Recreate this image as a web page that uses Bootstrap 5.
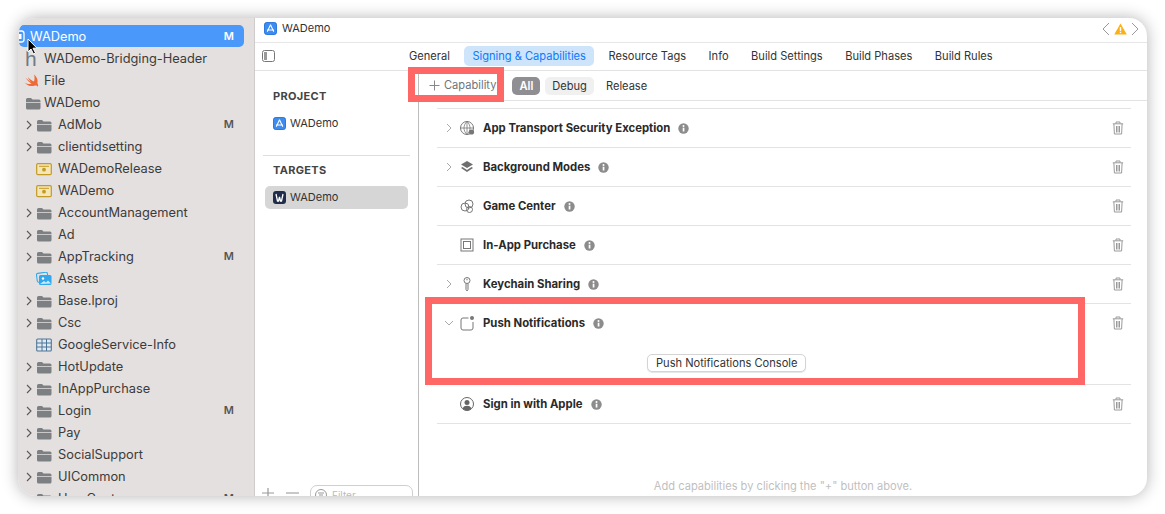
<!DOCTYPE html>
<html lang="en">
<head>
<meta charset="utf-8">
<title>WADemo</title>
<link href="https://cdn.jsdelivr.net/npm/bootstrap@5.3.0/dist/css/bootstrap.min.css" rel="stylesheet">
<style>
html,body{height:100%;background:#fff;overflow:hidden}
body{padding:18px;font-family:Inter,"Liberation Sans",sans-serif;font-size:12px;color:#333}
.xc-win{width:1129px;height:478px;border-radius:18px;overflow:hidden;background:#fff;box-shadow:0 0 16px rgba(0,0,0,.3);position:relative}
.xc-side{width:237px;flex:none;background:#e4e0df;border-right:1px solid #cfcdcc;padding:7px 10px 0 1px;font-size:12.8px;color:#3b3b3b}
.xc-row{height:22px;white-space:nowrap;padding-top:1px}
.xc-row.on{background:#4b98fb;color:#fff;border-radius:5px}
.xc-chev{width:8px;height:10px;flex:none;margin-left:6px;margin-right:3px}
.xc-fi{width:16px;height:14px;flex:none;margin-right:6px}
.xc-fi.leaf{margin-left:17px}
.xc-h{width:12px;flex:none;margin-right:7px;font-family:"Liberation Sans",sans-serif;font-size:21px;line-height:1;color:#6f7a85}
.xc-m{margin-left:auto;margin-right:10px;font-weight:600;font-size:11px;color:#555}
.on .xc-m{color:#fff}
.xc-main{min-width:0}
.xc-title{height:25px;border-bottom:1px solid #e6e6e6;padding:0 10px 3px 9px;font-size:11px;flex:none}
.xc-tabs{height:28px;border-bottom:1px solid #e3e3e3;padding-left:7px;padding-bottom:1px;font-size:11.1px;flex:none}
.xc-tab{padding:3px 8px;margin-right:6.5px;line-height:14px;border-radius:5px;color:#333}
.xc-tab.on{background:#cde4fb;color:#0a7aff}
.xc-mid{width:164px;flex:none;border-right:1px solid #bdbdbd;padding:0 8px;position:relative;overflow:hidden}
.xc-head{font-size:11px;font-weight:700;color:#444;letter-spacing:.3px;padding-left:10px;line-height:16px}
.xc-head.first{padding-top:17px}
.xc-tgt{height:23px;padding-left:10px;font-size:11px;gap:4px}
.xc-tgt.on{background:#d6d6d6;border-radius:5px;margin:8px 2px 0;padding-left:8px}
.xc-div{border-top:1px solid #dedede;margin:20px 0 6px}
.xc-right{min-width:0;position:relative}
.xc-bar{height:30px;border-bottom:1px solid #e3e3e3;font-size:11.1px;padding-left:10px;flex:none}
.xc-pill{padding:2px 7px;line-height:14px;border-radius:5px}
.xc-pill.sel{background:#8e8e93;color:#fff;font-weight:600}
.xc-pill.alt{background:#f0f0f0}
.xc-caps{margin:7px 16px 0 18px;border-top:1px solid #e3e3e3}
.xc-cap{height:39px;border-bottom:1px solid #e3e3e3;padding:0 7px 0 7px}
.xc-name{font-weight:700;font-size:11.35px;color:#2a2a2a;padding-top:1px}
.xc-cchev{width:10px;height:10px;flex:none;margin-right:5px}
.xc-cicon{width:16px;height:16px;flex:none;margin-right:8px}
.xc-info{width:11px;height:11px;margin-left:8px;flex:none}
.xc-trash{width:12px;height:14px;margin-left:auto;flex:none}
.xc-open{height:81px;border-bottom:1px solid #e3e3e3}
.xc-openhead{height:38px;padding:0 7px}
.xc-console{position:absolute;left:210px;bottom:12px;margin:0;padding:0 8px;height:18px;line-height:16px;font-size:11.1px;color:#333;background:#fff;border:1px solid #d4d4d4;border-radius:5px;box-shadow:0 1px 1px rgba(0,0,0,.1)}
.xc-hint{position:absolute;left:0;right:0;bottom:1px;text-align:center;color:#bfbfbf;font-size:11.1px}
.xc-red{position:absolute;border:7px solid #ff6767;z-index:5;pointer-events:none}
.xc-red.a{left:390px;top:49px;width:96px;height:35px}
.xc-red.b{left:407px;top:279px;width:660px;height:88px}
.xc-cursor{position:absolute;left:9px;top:20px;width:12px;height:17px;z-index:6}
.xc-pm{left:243px;top:468px}
.xc-filter{position:absolute;left:292px;top:467px;width:103px;height:24px;border:1px solid #cfcfcf;border-radius:7px;font-size:10px;color:#bbb;padding:2px 0 0 21px}
.xc-fc{position:absolute;left:4px;top:3px;width:12px;height:12px}
</style>
</head>
<body>
<svg width="0" height="0" class="position-absolute">
<defs>
<symbol id="i-chev" viewBox="0 0 8 10"><path d="M2 1l4 4-4 4" fill="none" stroke="#5a5a5a" stroke-width="1.1"/></symbol>
<symbol id="i-chev2" viewBox="0 0 10 10"><path d="M3 1l4 4-4 4" fill="none" stroke="#a8a8a8" stroke-width="1"/></symbol>
<symbol id="i-down" viewBox="0 0 10 10"><path d="M1 3l4 4 4-4" fill="none" stroke="#a8a8a8" stroke-width="1"/></symbol>
<symbol id="i-folder" viewBox="0 0 16 14"><path d="M1 3.500A1.500 1.500 0 0 1 2.500 2H6l1.500 1.500H14A1.500 1.500 0 0 1 15.500 5v1H1z" fill="#7d8083"/><path d="M1 6.700h14.500V12a1.500 1.500 0 0 1-1.500 1.500H2.500A1.500 1.500 0 0 1 1 12z" fill="#7d8083"/></symbol>
<symbol id="i-cfg" viewBox="0 0 16 14"><rect x=".7" y="1.700" width="14.600" height="11" rx="1.200" fill="#f4e6b8" stroke="#c39a22" stroke-width="1.200"/><path d="M3 4.300h10" stroke="#c39a22" stroke-width="1"/><circle cx="8" cy="7.700" r="1.900" fill="#c39a22"/></symbol>
<symbol id="i-app" viewBox="0 0 14 14"><rect x=".5" y=".5" width="13" height="13" rx="2.500" fill="#3d8cf0" stroke="#2070d8"/><path d="M7 3L3.500 10.500M7 3l3.500 7.500M3.200 8.500h7.600" stroke="#fff" stroke-width="1.100" fill="none"/></symbol>
<symbol id="i-info" viewBox="0 0 11 11"><circle cx="5.500" cy="5.500" r="5.200" fill="#8c8c8c"/><rect x="4.700" y="4.700" width="1.700" height="3.800" fill="#fff"/><circle cx="5.500" cy="3.100" r="1" fill="#fff"/></symbol>
<symbol id="i-trash" viewBox="0 0 12 14"><path d="M.8 2.800h10.400M4 2.500V1h4v1.500M1.900 3l.5 10h7.200l.5-10M4.500 5v6.500M6 5v6.500M7.500 5v6.500" fill="none" stroke="#9a9a9a" stroke-width="1"/></symbol>
</defs>
</svg>
<div class="xc-win d-flex">
  <aside class="xc-side">
    <ul class="list-unstyled m-0">
      <li class="xc-row on d-flex align-items-center"><svg width="6" height="13" viewBox="6 0 6 13" style="margin-right:5px;flex:none"><rect x="1" y="1" width="10" height="11" rx="2.500" fill="none" stroke="#fff" stroke-width="1.300"/><rect x="3.500" y="4" width="5" height="5" fill="#fff"/></svg>WADemo<span class="xc-m">M</span></li>
      <li class="xc-row d-flex align-items-center" style="padding-left:6px"><span class="xc-h">h</span>WADemo-Bridging-Header</li>
      <li class="xc-row d-flex align-items-center" style="padding-left:5px"><svg class="xc-fi" viewBox="0 0 16 14" style="margin-right:4px"><path d="M10 .5c3 2.500 4.300 6.300 3.300 8.500 1 1.500 1 3 .5 3.700-.700-1.200-2-1.500-3.500-1-3 1-7 .2-9.800-3.200C3 10 5.500 10.500 7.500 9.700 5 8 3 6 1.500 3.500 3.500 5.500 6 7.300 7 8 5.500 6.500 4.500 4.800 3.800 3 6 5.500 8.500 7 10 7.500c.8-2 .7-4.500 0-7z" fill="#ee6a36"/></svg>File</li>
      <li class="xc-row d-flex align-items-center" style="margin-left:-4px"><svg width="3" height="6" viewBox="0 0 3 6" style="margin-right:7px;flex:none"><path d="M0 2l1.500 1.500L3 2" fill="none" stroke="#666"/></svg><svg class="xc-fi" style="margin-right:3px"><use href="#i-folder"/></svg>WADemo</li>
      <li class="xc-row d-flex align-items-center"><svg class="xc-chev"><use href="#i-chev"/></svg><svg class="xc-fi"><use href="#i-folder"/></svg>AdMob<span class="xc-m">M</span></li>
      <li class="xc-row d-flex align-items-center"><svg class="xc-chev"><use href="#i-chev"/></svg><svg class="xc-fi"><use href="#i-folder"/></svg>clientidsetting</li>
      <li class="xc-row d-flex align-items-center"><svg class="xc-fi leaf"><use href="#i-cfg"/></svg>WADemoRelease</li>
      <li class="xc-row d-flex align-items-center"><svg class="xc-fi leaf"><use href="#i-cfg"/></svg>WADemo</li>
      <li class="xc-row d-flex align-items-center"><svg class="xc-chev"><use href="#i-chev"/></svg><svg class="xc-fi"><use href="#i-folder"/></svg>AccountManagement</li>
      <li class="xc-row d-flex align-items-center"><svg class="xc-chev"><use href="#i-chev"/></svg><svg class="xc-fi"><use href="#i-folder"/></svg>Ad</li>
      <li class="xc-row d-flex align-items-center"><svg class="xc-chev"><use href="#i-chev"/></svg><svg class="xc-fi"><use href="#i-folder"/></svg>AppTracking<span class="xc-m">M</span></li>
      <li class="xc-row d-flex align-items-center"><svg class="xc-fi leaf" viewBox="0 0 16 14"><rect x=".8" y=".8" width="11" height="9" rx="1.500" fill="none" stroke="#2fa8ee" stroke-width="1.100" transform="rotate(-8 6 5)"/><rect x="3" y="3" width="12.500" height="10" rx="1.500" fill="#2fa8ee"/><circle cx="7" cy="6.500" r="1.200" fill="#fff"/><path d="M4 12l4-3 2 1.500 2-2 3 3z" fill="#cdeafd"/></svg>Assets</li>
      <li class="xc-row d-flex align-items-center"><svg class="xc-chev"><use href="#i-chev"/></svg><svg class="xc-fi"><use href="#i-folder"/></svg>Base.lproj</li>
      <li class="xc-row d-flex align-items-center"><svg class="xc-chev"><use href="#i-chev"/></svg><svg class="xc-fi"><use href="#i-folder"/></svg>Csc</li>
      <li class="xc-row d-flex align-items-center"><svg class="xc-fi leaf" viewBox="0 0 16 14"><rect x=".7" y="1" width="14.600" height="12" rx="1" fill="#dfe9f1" stroke="#4f7596" stroke-width="1.100"/><path d="M.7 5h14.600M.7 9h14.600M6 1v12M10.500 1v12" stroke="#4f7596"/></svg>GoogleService-Info</li>
      <li class="xc-row d-flex align-items-center"><svg class="xc-chev"><use href="#i-chev"/></svg><svg class="xc-fi"><use href="#i-folder"/></svg>HotUpdate</li>
      <li class="xc-row d-flex align-items-center"><svg class="xc-chev"><use href="#i-chev"/></svg><svg class="xc-fi"><use href="#i-folder"/></svg>InAppPurchase</li>
      <li class="xc-row d-flex align-items-center"><svg class="xc-chev"><use href="#i-chev"/></svg><svg class="xc-fi"><use href="#i-folder"/></svg>Login<span class="xc-m">M</span></li>
      <li class="xc-row d-flex align-items-center"><svg class="xc-chev"><use href="#i-chev"/></svg><svg class="xc-fi"><use href="#i-folder"/></svg>Pay</li>
      <li class="xc-row d-flex align-items-center"><svg class="xc-chev"><use href="#i-chev"/></svg><svg class="xc-fi"><use href="#i-folder"/></svg>SocialSupport</li>
      <li class="xc-row d-flex align-items-center"><svg class="xc-chev"><use href="#i-chev"/></svg><svg class="xc-fi"><use href="#i-folder"/></svg>UICommon</li>
      <li class="xc-row d-flex align-items-center"><svg class="xc-chev"><use href="#i-chev"/></svg><svg class="xc-fi"><use href="#i-folder"/></svg>UserCenter<span class="xc-m">M</span></li>
    </ul>
  </aside>
  <main class="xc-main flex-grow-1 d-flex flex-column">
    <div class="xc-title d-flex align-items-center">
      <svg width="13" height="13" style="margin-right:5px"><use href="#i-app"/></svg>WADemo
      <div class="ms-auto d-flex align-items-center gap-1" style="margin-right:-2px">
        <svg width="8" height="14" viewBox="0 0 8 14"><path d="M7 1L1 7l6 6" fill="none" stroke="#999" stroke-width="1"/></svg>
        <svg width="13" height="12" viewBox="0 0 13 12"><path d="M6.500 .5L12.800 11.500H.2z" fill="#fbb116"/><rect x="5.800" y="4" width="1.400" height="4" fill="#fff"/><rect x="5.800" y="8.800" width="1.400" height="1.400" fill="#fff"/></svg>
        <svg width="8" height="14" viewBox="0 0 8 14"><path d="M1 1l6 6-6 6" fill="none" stroke="#999" stroke-width="1"/></svg>
      </div>
    </div>
    <div class="xc-tabs d-flex align-items-center">
      <svg width="13" height="12" viewBox="0 0 13 12" style="margin-right:126px"><rect x=".5" y=".5" width="12" height="11" rx="2" fill="#fff" stroke="#777"/><rect x="2" y="2" width="3" height="8" fill="#999"/></svg>
      <span class="xc-tab">General</span>
      <span class="xc-tab on">Signing &amp; Capabilities</span>
      <span class="xc-tab">Resource Tags</span>
      <span class="xc-tab">Info</span>
      <span class="xc-tab">Build Settings</span>
      <span class="xc-tab">Build Phases</span>
      <span class="xc-tab">Build Rules</span>
    </div>
    <div class="flex-grow-1 d-flex" style="min-height:0">
      <section class="xc-mid">
        <div class="xc-head first">PROJECT</div>
        <div class="xc-tgt d-flex align-items-center mt-2"><svg width="13" height="13"><use href="#i-app"/></svg>WADemo</div>
        <div class="xc-div"></div>
        <div class="xc-head">TARGETS</div>
        <div class="xc-tgt on d-flex align-items-center"><svg width="13" height="13" viewBox="0 0 13 13"><rect width="13" height="13" rx="3" fill="#1f2d4a"/><path d="M3 3l1.500 7h1L6.500 6l1 4h1L10 3" stroke="#fff" stroke-width="1.300" fill="none"/></svg>WADemo</div>
      </section>
      <section class="xc-right flex-grow-1">
        <div class="xc-bar d-flex align-items-center">
          <svg width="11" height="11" viewBox="0 0 11 11"><path d="M5.500 .5v10M.5 5.500h10" stroke="#888" stroke-width="1"/></svg>
          <span class="text-secondary" style="margin-left:4px;margin-right:16px">Capability</span>
          <span class="xc-pill sel" style="margin-right:5px">All</span>
          <span class="xc-pill alt" style="margin-right:5px">Debug</span>
          <span class="xc-pill">Release</span>
        </div>
        <div class="xc-caps">
          <div class="xc-cap d-flex align-items-center"><svg class="xc-cchev"><use href="#i-chev2"/></svg><svg class="xc-cicon" viewBox="0 0 16 16"><circle cx="8" cy="8" r="6.500" fill="none" stroke="#777"/><path d="M8 1.500v13M1.500 8h13M8 1.500C4 5 4 11 8 14.500M8 1.500c4 3.500 4 9.500 0 13" fill="none" stroke="#777" stroke-width=".8"/><circle cx="12.500" cy="12" r="2.600" fill="#777"/></svg><span class="xc-name">App Transport Security Exception</span><svg class="xc-info"><use href="#i-info"/></svg><svg class="xc-trash"><use href="#i-trash"/></svg></div>
          <div class="xc-cap d-flex align-items-center"><svg class="xc-cchev"><use href="#i-chev2"/></svg><svg class="xc-cicon" viewBox="0 0 16 16"><path d="M8 2l6 3.500L8 9 2 5.500z" fill="#6f6f6f"/><path d="M2 9l6 4 6-4-1.500-1L8 11 3.500 8z" fill="#6f6f6f"/></svg><span class="xc-name">Background Modes</span><svg class="xc-info"><use href="#i-info"/></svg><svg class="xc-trash"><use href="#i-trash"/></svg></div>
          <div class="xc-cap d-flex align-items-center"><span class="xc-cchev"></span><svg class="xc-cicon" viewBox="0 0 16 16"><circle cx="6" cy="9" r="4" fill="none" stroke="#777"/><circle cx="10" cy="6" r="4" fill="none" stroke="#777"/><circle cx="10.500" cy="11.500" r="3" fill="none" stroke="#777"/></svg><span class="xc-name">Game Center</span><svg class="xc-info"><use href="#i-info"/></svg><svg class="xc-trash"><use href="#i-trash"/></svg></div>
          <div class="xc-cap d-flex align-items-center"><span class="xc-cchev"></span><svg class="xc-cicon" viewBox="0 0 16 16"><rect x="2" y="2" width="12" height="12" fill="none" stroke="#777"/><rect x="4.500" y="4.500" width="7" height="7" fill="none" stroke="#777"/></svg><span class="xc-name">In-App Purchase</span><svg class="xc-info"><use href="#i-info"/></svg><svg class="xc-trash"><use href="#i-trash"/></svg></div>
          <div class="xc-cap d-flex align-items-center"><svg class="xc-cchev"><use href="#i-chev2"/></svg><svg class="xc-cicon" viewBox="0 0 16 16"><circle cx="8" cy="4.500" r="3" fill="none" stroke="#777"/><path d="M7 7.500v6l1 1.500 1-1.500v-6M8 2.800v1.500" fill="none" stroke="#777"/></svg><span class="xc-name">Keychain Sharing</span><svg class="xc-info"><use href="#i-info"/></svg><svg class="xc-trash"><use href="#i-trash"/></svg></div>
          <div class="xc-open position-relative">
            <div class="xc-openhead d-flex align-items-center"><svg class="xc-cchev"><use href="#i-down"/></svg><svg class="xc-cicon" viewBox="0 0 16 16"><path d="M9.500 3H4a2 2 0 0 0-2 2v8a2 2 0 0 0 2 2h8a2 2 0 0 0 2-2V7" fill="none" stroke="#777"/><circle cx="13" cy="3" r="2" fill="#777"/></svg><span class="xc-name">Push Notifications</span><svg class="xc-info"><use href="#i-info"/></svg><svg class="xc-trash"><use href="#i-trash"/></svg></div>
            <button type="button" class="btn xc-console">Push Notifications Console</button>
          </div>
          <div class="xc-cap d-flex align-items-center"><span class="xc-cchev"></span><svg class="xc-cicon" viewBox="0 0 16 16"><circle cx="8" cy="8" r="6.500" fill="none" stroke="#666"/><circle cx="8" cy="6.500" r="2.500" fill="#666"/><path d="M3.500 12.500c1-2 2.500-2.700 4.500-2.700s3.500.7 4.500 2.700C11 14 9.500 14.500 8 14.500s-3-.5-4.500-2z" fill="#666"/></svg><span class="xc-name">Sign in with Apple</span><svg class="xc-info"><use href="#i-info"/></svg><svg class="xc-trash"><use href="#i-trash"/></svg></div>
        </div>
        <div class="xc-hint">Add capabilities by clicking the "+" button above.</div>
      </section>
    </div>
  </main>
  <svg class="xc-cursor" viewBox="0 0 12 17"><path d="M1 1v13l3-3 2.500 5 2-1-2.500-4.800H10z" fill="#000" stroke="#fff" stroke-width="1"/></svg>
  <div class="xc-red a"></div>
  <div class="xc-red b"></div>
  <svg class="position-absolute xc-pm" width="60" height="12" viewBox="0 0 60 12"><path d="M7 2v10M1 7h12" stroke="#999" stroke-width="1.200"/><path d="M25 7h13" stroke="#bbb" stroke-width="1.600"/></svg>
  <div class="xc-filter"><svg class="xc-fc" viewBox="0 0 12 12"><circle cx="6" cy="6" r="5.500" fill="none" stroke="#999"/><path d="M3 4h6M4 6h4M5 8h2" stroke="#999"/></svg>Filter</div>
</div>
<script src="https://cdn.jsdelivr.net/npm/bootstrap@5.3.0/dist/js/bootstrap.bundle.min.js"></script>
</body>
</html>
